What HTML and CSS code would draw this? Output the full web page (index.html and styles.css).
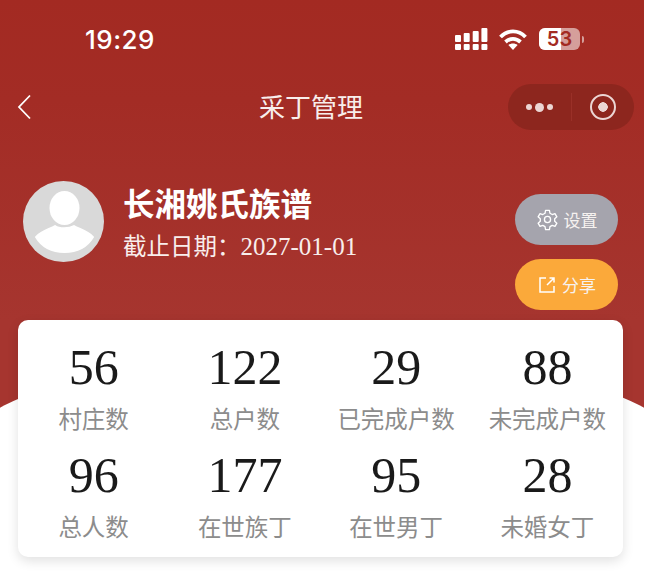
FILE: index.html
```html
<!DOCTYPE html>
<html>
<head>
    <meta charset="UTF-8">
    <title>采丁管理</title>
    <link rel="stylesheet" href="styles.css">
</head>
<body>
    <div class="page">
        <div class="header">
            <div class="status-bar">
                <span class="time">19:29</span>
                <div class="status-icons">
                    <svg class="signal" width="33" height="22" viewBox="0 0 33 22" fill="#fff">
                        <rect x="0" y="7" width="6" height="7" rx="1"/>
                        <rect x="8.700" y="5" width="6" height="9" rx="1"/>
                        <rect x="17.700" y="3" width="6" height="11" rx="1"/>
                        <rect x="26.400" y="0" width="6" height="14" rx="1"/>
                        <rect x="0" y="16" width="6" height="6" rx="1"/>
                        <rect x="8.700" y="16" width="6" height="6" rx="1"/>
                        <rect x="17.700" y="16" width="6" height="6" rx="1"/>
                        <rect x="26.400" y="16" width="6" height="6" rx="1"/>
                    </svg>
                    <svg class="wifi" width="28" height="21" viewBox="0 0 28 21" fill="none" stroke="#fff" stroke-width="3.800">
                        <path d="M1.500 8C8.500 0.500 19.500 0.500 26.500 8"/>
                        <path d="M6.500 13C11 8.800 17 8.800 21.500 13"/>
                        <path d="M14 21L9.400 16C12 14 16 14 18.600 16Z" fill="#fff" stroke="none"/>
                    </svg>
                    <div class="battery">
                        <div class="battery-body">
                            <span class="battery-fill"></span>
                            <span class="battery-num">53</span>
                        </div>
                        <span class="battery-tip"></span>
                    </div>
                </div>
            </div>

            <div class="nav-bar">
                <svg class="back" width="16" height="26" viewBox="0 0 16 26" fill="none" stroke="#fff" stroke-width="1.800">
                    <path d="M14 1.500L3 13l11 11.500"/>
                </svg>
                <h1>采丁管理</h1>
                <div class="capsule">
                    <div class="capsule-dots"><i></i><i class="big"></i><i></i></div>
                    <span class="capsule-line"></span>
                    <div class="capsule-target"><i></i></div>
                </div>
            </div>

            <div class="profile">
                <svg class="avatar" width="81" height="81" viewBox="0 0 81 81">
                    <circle cx="40.500" cy="40.500" r="40.500" fill="#d9d9d9"/>
                    <ellipse cx="41.500" cy="27" rx="15" ry="17" fill="#fff"/>
                    <path d="M13 56C17 51 27 48 32 45C36 48 46 48 51 45C56 48 66 51 70 56C64 66 54 71 41.500 71S19 66 13 56Z" fill="#fff" stroke="#fff" stroke-width="2" stroke-linejoin="round"/>
                </svg>
                <div class="profile-text">
                    <div class="profile-name">长湘姚氏族谱</div>
                    <div class="profile-date">截止日期：<span class="profile-date-num">2027-01-01</span></div>
                </div>
                <div class="actions">
                    <button class="pill pill-gray">
                        <svg width="23" height="23" viewBox="0 0 24 24" fill="none" stroke="#fff" stroke-width="1.400" stroke-linejoin="round">
                            <path d="M10 2.500h4l.6 3 2.300 1.300 2.900-1 2 3.400-2.300 2v2.600l2.300 2-2 3.400-2.900-1-2.300 1.300-.6 3h-4l-.6-3-2.300-1.300-2.900 1-2-3.400 2.300-2v-2.600l-2.300-2 2-3.400 2.900 1 2.300-1.300z"/>
                            <circle cx="12" cy="12" r="3.200"/>
                        </svg>
                        设置
                    </button>
                    <button class="pill pill-orange">
                        <svg width="20" height="20" viewBox="0 0 20 20" fill="none" stroke="#fff" stroke-width="1.500">
                            <path d="M9 3H3v14h14v-6"/>
                            <path d="M10 10l7-7M12.500 3H17v4.500"/>
                        </svg>
                        分享
                    </button>
                </div>
            </div>
        </div>

        <div class="stats">
            <div class="stat"><div class="stat-num">56</div><div class="stat-label">村庄数</div></div>
            <div class="stat"><div class="stat-num">122</div><div class="stat-label">总户数</div></div>
            <div class="stat"><div class="stat-num">29</div><div class="stat-label">已完成户数</div></div>
            <div class="stat"><div class="stat-num">88</div><div class="stat-label">未完成户数</div></div>
            <div class="stat"><div class="stat-num">96</div><div class="stat-label">总人数</div></div>
            <div class="stat"><div class="stat-num">177</div><div class="stat-label">在世族丁</div></div>
            <div class="stat"><div class="stat-num">95</div><div class="stat-label">在世男丁</div></div>
            <div class="stat"><div class="stat-num">28</div><div class="stat-label">未婚女丁</div></div>
        </div>
    </div>
</body>
</html>
```

FILE: styles.css
```css
* {
    box-sizing: border-box;
}

body {
    margin: 0;
    background-color: #fff;
    font-family: "Liberation Serif", "Noto Sans CJK SC", serif;
}

.page {
    position: relative;
    width: 644px;
    height: 582px;
    overflow: hidden;
}

.header {
    height: 460px;
    padding-top: 27px;
    background: linear-gradient(180deg, #a32a22 0, #a32c25 100px, #a6352f 320px);
    color: #fff;
}

/* white hill under the card */
.page::after {
    content: "";
    position: absolute;
    left: -38px;
    top: 353px;
    width: 720px;
    height: 198px;
    border-radius: 50%;
    background-color: #fff;
}

.status-bar {
    display: flex;
    justify-content: space-between;
    align-items: center;
    height: 24px;
    padding: 0 60px 0 85px;
}

.time {
    font-family: "Inter", "Liberation Sans", sans-serif;
    font-size: 26px;
    font-weight: 500;
    letter-spacing: 0.5px;
}

.status-icons {
    display: flex;
    align-items: center;
    gap: 11px;
}

.battery {
    display: flex;
    align-items: center;
    gap: 2px;
    margin-left: 1px;
}

.battery-body {
    position: relative;
    width: 41px;
    height: 22px;
    border-radius: 6px;
    background-color: rgba(255,255,255,0.55);
    overflow: hidden;
}

.battery-fill {
    position: absolute;
    left: 0;
    top: 0;
    width: 22px;
    height: 22px;
    background-color: #fff;
}

.battery-num {
    position: absolute;
    left: 0;
    right: 0;
    top: 0;
    font-family: "Inter", "Liberation Sans", sans-serif;
    font-size: 20px;
    font-weight: 600;
    line-height: 22px;
    text-align: center;
    color: #a32a22;
}

.battery-tip {
    width: 2px;
    height: 7px;
    border-radius: 0 2px 2px 0;
    background-color: rgba(255,255,255,0.55);
}

.nav-bar {
    position: relative;
    display: flex;
    justify-content: space-between;
    align-items: center;
    height: 46px;
    margin-top: 33px;
    padding: 0 10px 0 16px;
}

.nav-bar h1 {
    position: absolute;
    left: 0;
    right: 0;
    top: 2px;
    margin: 0;
    padding-right: 22px;
    font-size: 26px;
    font-weight: normal;
    line-height: 46px;
    text-align: center;
    color: #f8eeec;
}

.capsule {
    display: flex;
    align-items: center;
    width: 126px;
    height: 46px;
    border-radius: 23px;
    background-color: #8d261e;
}

.capsule-dots {
    display: flex;
    justify-content: center;
    align-items: center;
    gap: 3px;
    width: 63px;
}

.capsule-dots i {
    width: 6px;
    height: 6px;
    border-radius: 50%;
    background-color: #ecd6d4;
}

.capsule-dots i.big {
    width: 9px;
    height: 9px;
}

.capsule-line {
    width: 1px;
    height: 28px;
    background-color: #9a3028;
}

.capsule-target {
    display: flex;
    justify-content: center;
    align-items: center;
    width: 62px;
}

.capsule-target i {
    display: flex;
    width: 26px;
    height: 26px;
    border: 2.500px solid #ecd6d4;
    border-radius: 50%;
    background: radial-gradient(circle, #ecd6d4 0, #ecd6d4 4.500px, transparent 5px);
}

.profile {
    display: flex;
    align-items: flex-start;
    margin-top: 51px;
    padding: 0 26px 0 23px;
}

.avatar {
    flex-shrink: 0;
}

.profile-text {
    flex: 1;
    padding-left: 19px;
}

.profile-name {
    margin-top: 5px;
    font-size: 31.500px;
    font-weight: bold;
    line-height: 40px;
}

.profile-date {
    margin-top: 5px;
    font-size: 23.500px;
    line-height: 32px;
    color: #f8eeec;
}

.profile-date-num {
    font-size: 25px;
}

.actions {
    display: flex;
    flex-direction: column;
    gap: 14px;
    margin-top: 13px;
}

.pill {
    display: flex;
    justify-content: center;
    align-items: center;
    gap: 5px;
    width: 103px;
    height: 51px;
    padding: 0;
    border: none;
    border-radius: 26px;
    color: #f6f2f0;
    font-family: inherit;
    font-size: 17px;
}

.pill-gray {
    background-color: #a5a4ad;
}

.pill-orange {
    background-color: #fba93a;
}

.stats {
    position: absolute;
    left: 18px;
    top: 320px;
    z-index: 1;
    display: grid;
    grid-template-columns: repeat(4, 1fr);
    grid-auto-rows: 108px;
    width: 605px;
    height: 237px;
    padding: 19px 0 0;
    border-radius: 10px;
    background-color: #fff;
    box-shadow: 0 4px 12px rgba(0,0,0,0.12);
}

.stat {
    text-align: center;
}

.stat-num {
    font-size: 50px;
    line-height: 56px;
    color: #1a1a1a;
}

.stat-label {
    margin-top: 8px;
    font-size: 23.500px;
    line-height: 34px;
    color: #8c8c8c;
}
```
